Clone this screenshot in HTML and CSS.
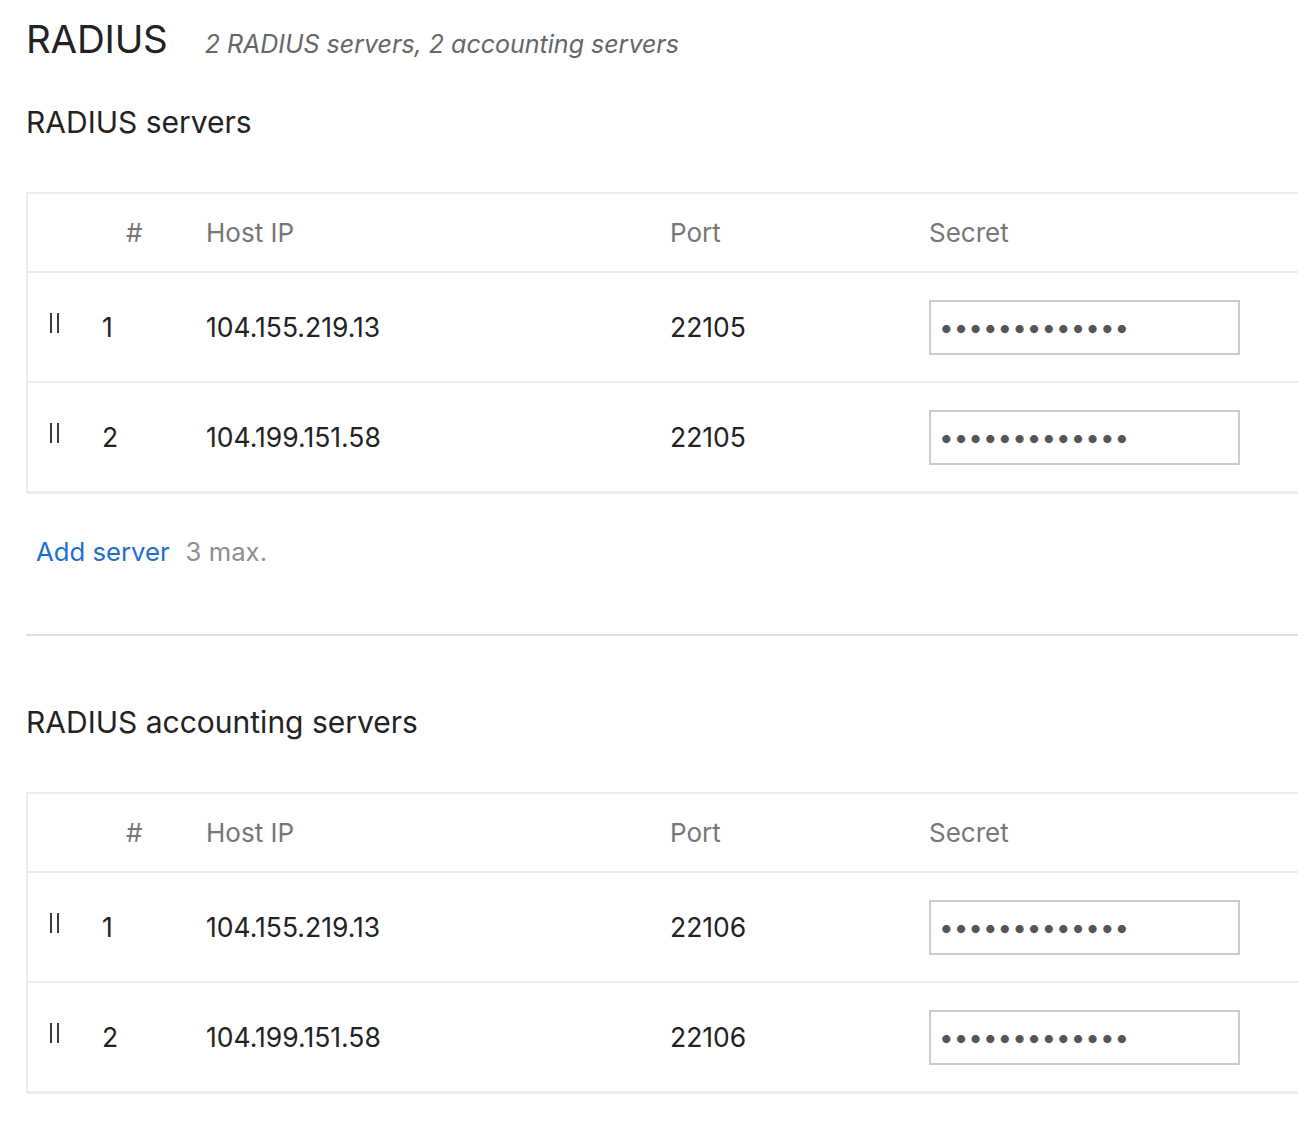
FILE: index.html
```html
<!DOCTYPE html>
<html>
<head>
<meta charset="utf-8">
<link rel="stylesheet" href="styles.css">
</head>
<body>
<div class="page">
  <div class="title-row">
    <h1 class="title">RADIUS</h1>
    <span class="subtitle">2 RADIUS servers, 2 accounting servers</span>
  </div>

  <section class="section">
    <h2 class="section-title">RADIUS servers</h2>
    <div class="table">
      <div class="row head">
        <div class="cell handle-cell"></div>
        <div class="cell num-head">#</div>
        <div class="cell">Host IP</div>
        <div class="cell">Port</div>
        <div class="cell">Secret</div>
      </div>
      <div class="row">
        <div class="cell handle-cell"><span class="handle"></span></div>
        <div class="cell">1</div>
        <div class="cell">104.155.219.13</div>
        <div class="cell">22105</div>
        <div class="cell"><input class="secret" type="password" value="xxxxxxxxxxxxx" readonly></div>
      </div>
      <div class="row">
        <div class="cell handle-cell"><span class="handle"></span></div>
        <div class="cell">2</div>
        <div class="cell">104.199.151.58</div>
        <div class="cell">22105</div>
        <div class="cell"><input class="secret" type="password" value="xxxxxxxxxxxxx" readonly></div>
      </div>
    </div>
    <div class="add-row">
      <a class="add-link" href="#">Add server</a>
      <span class="add-note">3 max.</span>
    </div>
  </section>

  <hr class="divider">

  <section class="section second">
    <h2 class="section-title">RADIUS accounting servers</h2>
    <div class="table">
      <div class="row head">
        <div class="cell handle-cell"></div>
        <div class="cell num-head">#</div>
        <div class="cell">Host IP</div>
        <div class="cell">Port</div>
        <div class="cell">Secret</div>
      </div>
      <div class="row">
        <div class="cell handle-cell"><span class="handle"></span></div>
        <div class="cell">1</div>
        <div class="cell">104.155.219.13</div>
        <div class="cell">22106</div>
        <div class="cell"><input class="secret" type="password" value="xxxxxxxxxxxxx" readonly></div>
      </div>
      <div class="row">
        <div class="cell handle-cell"><span class="handle"></span></div>
        <div class="cell">2</div>
        <div class="cell">104.199.151.58</div>
        <div class="cell">22106</div>
        <div class="cell"><input class="secret" type="password" value="xxxxxxxxxxxxx" readonly></div>
      </div>
    </div>
  </section>
</div>
</body>
</html>
```

FILE: styles.css
```css
html, body {
  margin: 0;
  padding: 0;
  background: #fff;
  overflow: hidden;
}
body {
  font-family: Inter, "Noto Sans", sans-serif;
  color: #222;
}
.page {
  padding: 16px 0 0 26px;
  width: 1400px;
}
.title-row {
  display: flex;
  align-items: baseline;
  height: 58px;
}
.title {
  margin: 0;
  font-size: 38.5px;
  font-weight: 400;
  line-height: 46px;
  letter-spacing: -0.2px;
}
.subtitle {
  margin-left: 37px;
  font-size: 25px;
  font-style: italic;
  color: #666;
}
.section-title {
  margin: 0;
  font-size: 30px;
  font-weight: 400;
  line-height: 40px;
  height: 40px;
  padding-top: 28px;
}
.table {
  margin-top: 50px;
  border: 2px solid #ececec;
  border-right: none;
  border-bottom-width: 3px;
}
.row {
  display: grid;
  grid-template-columns: 74px 104px 464px 259px 1fr;
  height: 108px;
  align-items: center;
  border-top: 2px solid #ececec;
  font-size: 26.5px;
  color: #222;
}
.row.head {
  border-top: none;
  height: 77px;
  color: #777;
  font-size: 26px;
}
.cell {
  white-space: nowrap;
}
.num-head {
  padding-left: 24px;
}
.handle-cell {
  padding-left: 22px;
  display: flex;
  align-items: center;
}
.handle {
  display: block;
  width: 5px;
  height: 20px;
  border-left: 2px solid #3a3a3a;
  border-right: 2px solid #3a3a3a;
  margin-top: -8px;
}
.secret {
  box-sizing: border-box;
  width: 311px;
  height: 55px;
  border: 2px solid #cbcbcb;
  padding: 0 8px;
  font-family: Inter, sans-serif;
  font-size: 26px;
  letter-spacing: 0;
  color: #555;
  outline: none;
  background: #fff;
  margin: 0;
}
.add-row {
  display: flex;
  align-items: baseline;
  gap: 16px;
  padding: 42px 0 0 10px;
  font-size: 25.7px;
  height: 46px;
}
.add-link {
  color: #1f6fcf;
  text-decoration: none;
}
.add-note {
  color: #8e8e8e;
}
.divider {
  margin: 52px 0 0 0;
  border: none;
  border-top: 2px solid #dedede;
  height: 0;
}
.second .section-title {
  padding-top: 66px;
}
```
